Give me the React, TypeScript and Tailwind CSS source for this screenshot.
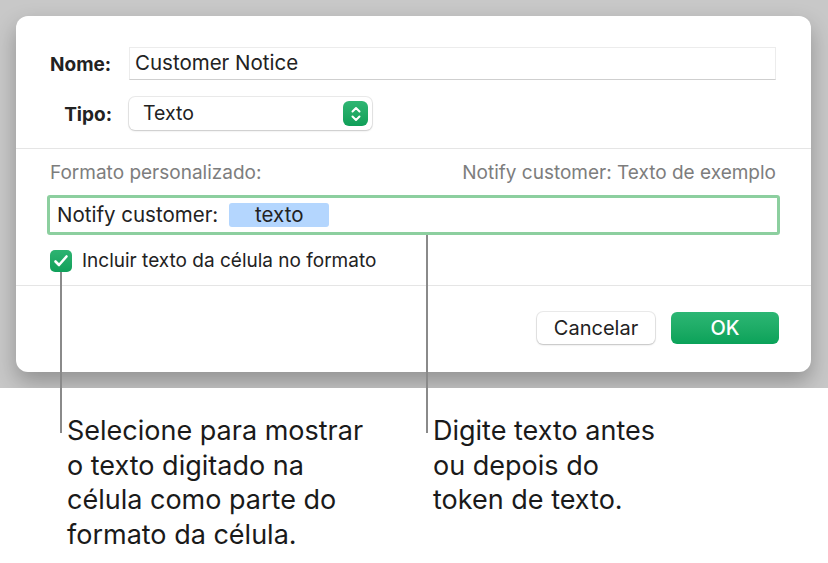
import React from "react";

const dialogFont = { fontFamily: "Inter, 'Noto Sans', sans-serif" } as React.CSSProperties;

function Stepper() {
  return (
    <div className="w-[25px] h-[25px] rounded-[6px] bg-gradient-to-b from-[#2fb673] to-[#0e9f58] flex items-center justify-center">
      <svg width="12" height="18" viewBox="0 0 12 18" fill="none">
        <path d="M2.5 6.5 L6 3 L9.5 6.5" stroke="white" strokeWidth="2" strokeLinecap="round" strokeLinejoin="round" />
        <path d="M2.5 11.5 L6 15 L9.5 11.5" stroke="white" strokeWidth="2" strokeLinecap="round" strokeLinejoin="round" />
      </svg>
    </div>
  );
}

function Check() {
  return (
    <div className="w-[22px] h-[22px] shrink-0 rounded-[5px] bg-gradient-to-b from-[#2db371] to-[#10a05a] flex items-center justify-center">
      <svg width="16" height="14" viewBox="0 0 16 14" fill="none">
        <path d="M2.5 7.5 L6 11 L13.5 2.5" stroke="white" strokeWidth="2.6" strokeLinecap="round" strokeLinejoin="round" />
      </svg>
    </div>
  );
}

export default function App() {
  return (
    <div className="relative w-[828px] h-[563px] bg-white overflow-hidden">
      <div className="h-[388px] bg-[#c8c8c8] pt-[16px] pl-[16px] overflow-hidden">
        <div
          className="w-[795px] h-[356px] bg-white rounded-[12px] flex flex-col shadow-[0_10px_22px_rgba(0,0,0,0.28)] text-[#222]"
          style={dialogFont}
        >
          <div className="pt-[31px] pl-[34px] pr-[35px] pb-[18px] flex flex-col gap-[17px]">
            <div className="flex items-center h-[33px]">
              <div className="w-[61px] text-right font-bold text-[19px] leading-[24px] pt-[2px]">Nome:</div>
              <div className="ml-[18px] flex-1 h-[33px] border border-[#ececec] border-b-[#cfcfcf] flex items-center pl-[5px] text-[20.5px]">
                Customer Notice
              </div>
            </div>
            <div className="flex items-center h-[33px]">
              <div className="w-[62px] text-right font-bold text-[19px] leading-[24px] pt-[3px]">Tipo:</div>
              <div className="ml-[17px] w-[243px] h-[33px] rounded-[6px] bg-white shadow-[0_0_0_1px_rgba(0,0,0,0.08),0_1px_2px_rgba(0,0,0,0.15)] flex items-center justify-between pl-[14px] pr-[4px] text-[19.5px]">
                <span>Texto</span>
                <Stepper />
              </div>
            </div>
          </div>
          <div className="h-px bg-[#e5e5e5]" />
          <div className="pt-[14px] pl-[31px] pr-[31px]">
            <div className="flex justify-between text-[19px] text-[#7d7d7d] h-[20px] leading-[20px] pl-[3px] pr-[4px]">
              <span>Formato personalizado:</span>
              <span>Notify customer: Texto de exemplo</span>
            </div>
            <div className="mt-[12px] w-[733px] h-[40px] border-[3px] border-[#8ccf9f] rounded-[3px] flex items-center pl-[7px] text-[20.5px]">
              <span>Notify customer:</span>
              <span className="ml-[11px] w-[100px] h-[24px] rounded-[3px] bg-[#b4d6fe] flex items-center justify-center">texto</span>
            </div>
            <div className="mt-[15px] h-[22px] flex items-center pl-[3px]">
              <Check />
              <span className="ml-[10px] text-[19px] leading-[22px]">Incluir texto da célula no formato</span>
            </div>
          </div>
          <div className="h-px bg-[#e5e5e5] mt-[13px]" />
          <div className="flex justify-end gap-[16px] pt-[26px] pr-[32px]">
            <div className="w-[118px] h-[32px] rounded-[6px] bg-white shadow-[0_0_0_1px_rgba(0,0,0,0.08),0_1px_2px_rgba(0,0,0,0.18)] flex items-center justify-center text-[20px]">
              Cancelar
            </div>
            <div className="w-[108px] h-[32px] rounded-[6px] bg-gradient-to-b from-[#2cb674] to-[#09a259] flex items-center justify-center text-[20px] text-white font-medium">
              OK
            </div>
          </div>
        </div>
      </div>

      <div
        className="flex pt-[26px] text-[27px] leading-[34.7px] text-[#1a1a1a]"
        style={dialogFont}
      >
        <div className="ml-[67px] w-[320px]">
          Selecione para mostrar
          <br />o texto digitado na
          <br />célula como parte do
          <br />formato da célula.
        </div>
        <div className="ml-[46px]">
          Digite texto antes
          <br />ou depois do
          <br />token de texto.
        </div>
      </div>

      <div className="absolute left-[60px] top-[272px] w-[2px] h-[161px] bg-[#8a8a8a]" />
      <div className="absolute left-[426px] top-[235px] w-[2px] h-[198px] bg-[#8a8a8a]" />
    </div>
  );
}
